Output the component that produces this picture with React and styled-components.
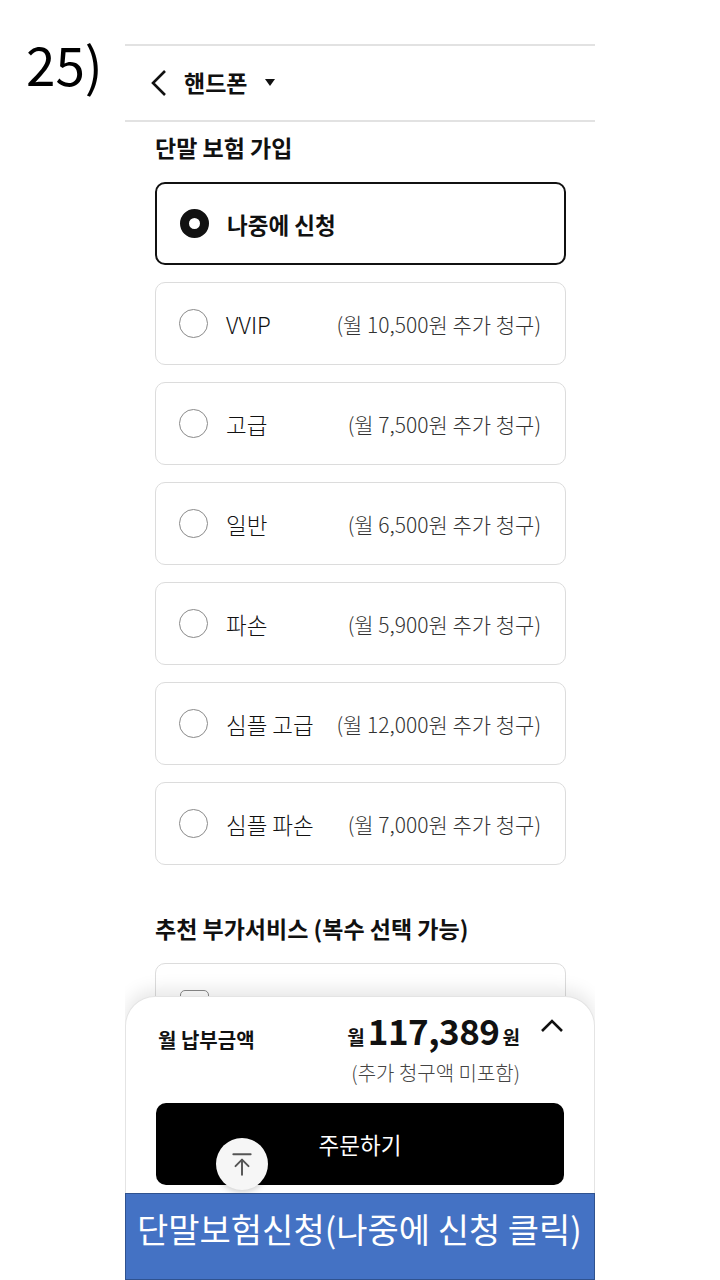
import React from "react";
import styled, { createGlobalStyle } from "styled-components";

const GlobalStyle = createGlobalStyle`
  * { box-sizing: border-box; }
  body {
    margin: 0;
    background: #ffffff;
    font-family: "Noto Sans CJK KR", "Noto Sans", sans-serif;
    color: #111;
  }
`;

const OPTIONS = [
  { name: "나중에 신청", price: null, selected: true },
  { name: "VVIP", price: "(월 10,500원 추가 청구)" },
  { name: "고급", price: "(월 7,500원 추가 청구)" },
  { name: "일반", price: "(월 6,500원 추가 청구)" },
  { name: "파손", price: "(월 5,900원 추가 청구)" },
  { name: "심플 고급", price: "(월 12,000원 추가 청구)" },
  { name: "심플 파손", price: "(월 7,000원 추가 청구)" },
];

const App = () => {
  return (
    <>
      <GlobalStyle />
      <Page>
        <StepNo>25)</StepNo>
        <Phone>
          <Header>
            <svg width="20" height="30" viewBox="0 0 20 30">
              <polyline points="17,3 5,15 17,27" fill="none" stroke="#111" strokeWidth="2.6" />
            </svg>
            <HeaderTitle>핸드폰</HeaderTitle>
            <svg width="10" height="8" viewBox="0 0 10 8">
              <polygon points="0,0 10,0 5,7" fill="#111" />
            </svg>
          </Header>

          <Content>
            <SectionTitle>단말 보험 가입</SectionTitle>
            <OptionList>
              {OPTIONS.map((opt) => (
                <OptionCard key={opt.name} $selected={opt.selected}>
                  <Radio $selected={opt.selected} />
                  <OptionName $selected={opt.selected}>{opt.name}</OptionName>
                  {opt.price && <OptionPrice>{opt.price}</OptionPrice>}
                </OptionCard>
              ))}
            </OptionList>

            <SectionTitle $top={48}>추천 부가서비스 (복수 선택 가능)</SectionTitle>
            <ExtraCard>
              <CheckBox />
              <ExtraText>안심 서비스 부가</ExtraText>
            </ExtraCard>
          </Content>

          <Sheet>
            <SheetRow>
              <SheetLabel>월 납부금액</SheetLabel>
              <PriceBlock>
                <PriceLine>
                  <PriceUnit>월</PriceUnit>
                  <PriceNum>117,389</PriceNum>
                  <PriceUnit>원</PriceUnit>
                </PriceLine>
                <PriceNote>(추가 청구액 미포함)</PriceNote>
              </PriceBlock>
              <ChevronUp viewBox="0 0 24 16" width="24" height="16">
                <polyline points="2,14 12,4 22,14" fill="none" stroke="#111" strokeWidth="2.6" />
              </ChevronUp>
            </SheetRow>
            <OrderButton>주문하기</OrderButton>
          </Sheet>

          <TopButton>
            <svg width="26" height="26" viewBox="0 0 24 24" fill="none" stroke="#555" strokeWidth="1.8" strokeLinecap="round" strokeLinejoin="round">
              <line x1="4" y1="3" x2="20" y2="3" />
              <line x1="12" y1="8" x2="12" y2="22" />
              <polyline points="6,14 12,8 18,14" />
            </svg>
          </TopButton>

          <Banner>단말보험신청(나중에 신청 클릭)</Banner>
        </Phone>
      </Page>
    </>
  );
};
export default App;

const Page = styled.div`
  display: flex;
  width: 720px;
  height: 1280px;
  overflow: hidden;
`;

const StepNo = styled.div`
  width: 125px;
  padding: 28px 0 0 26px;
  font-family: "Noto Sans CJK KR", "Noto Sans", sans-serif;
  font-size: 53px;
  line-height: 70px;
  color: #000;
`;

const Phone = styled.div`
  position: relative;
  width: 470px;
  height: 1280px;
  padding-top: 44px;
  overflow: hidden;
  background: #fff;
`;

const Header = styled.div`
  display: flex;
  align-items: center;
  gap: 12px;
  height: 78px;
  padding-left: 23px;
  border-top: 2px solid #e2e2e2;
  border-bottom: 2px solid #e2e2e2;
`;

const HeaderTitle = styled.span`
  font-size: 23px;
  font-weight: 700;
  line-height: 30px;
  margin: -3px 6px 0 4px;
`;

const Content = styled.div`
  padding: 0 29px 0 30px;
`;

const SectionTitle = styled.div`
  margin-top: ${(p) => p.$top ?? 10}px;
  font-size: 23px;
  font-weight: 700;
  line-height: 30px;
  color: #111;
`;

const OptionList = styled.div`
  display: flex;
  flex-direction: column;
  gap: 17px;
  margin-top: 20px;
`;

const OptionCard = styled.div`
  display: flex;
  align-items: center;
  height: 83px;
  padding: 0 24px 0 23px;
  border: ${(p) => (p.$selected ? "2px solid #111" : "1px solid #dcdcdc")};
  border-radius: 10px;
  background: #fff;
`;

const Radio = styled.span`
  flex: 0 0 auto;
  width: 29px;
  height: 29px;
  border-radius: 50%;
  border: ${(p) => (p.$selected ? "9px solid #111" : "1.5px solid #8a8a8a")};
  background: #fff;
`;

const OptionName = styled.span`
  margin-left: 18px;
  font-size: 22.5px;
  font-weight: ${(p) => (p.$selected ? 700 : 300)};
  line-height: 30px;
  color: #111;
`;

const OptionPrice = styled.span`
  margin-left: auto;
  font-size: 21px;
  font-weight: 300;
  line-height: 30px;
  color: #333;
`;

const ExtraCard = styled.div`
  display: flex;
  align-items: center;
  height: 83px;
  margin-top: 20px;
  padding: 0 24px;
  border: 1px solid #dcdcdc;
  border-radius: 10px;
`;

const CheckBox = styled.span`
  width: 29px;
  height: 29px;
  border: 1.5px solid #8a8a8a;
  border-radius: 5px;
`;

const ExtraText = styled.span`
  margin-left: 20px;
  font-size: 21px;
  font-weight: 300;
  color: #888;
`;

const Sheet = styled.div`
  position: absolute;
  top: 996px;
  left: 0;
  right: 0;
  bottom: 0;
  padding: 18px 30px 0 30px;
  background: #fff;
  border: 1px solid #e4e4e4;
  border-bottom: none;
  border-radius: 30px 30px 0 0;
  box-shadow: 0 -6px 18px rgba(0, 0, 0, 0.1);
`;

const SheetRow = styled.div`
  display: flex;
  align-items: flex-start;
`;

const SheetLabel = styled.span`
  padding-left: 2px;
  font-size: 20px;
  font-weight: 700;
  line-height: 50px;
`;

const PriceBlock = styled.div`
  display: flex;
  flex-direction: column;
  align-items: flex-end;
  margin-left: auto;
  margin-top: -10px;
`;

const PriceLine = styled.div`
  display: flex;
  align-items: baseline;
  gap: 3px;
  height: 50px;
  line-height: 50px;
`;

const PriceUnit = styled.span`
  font-size: 19px;
  font-weight: 700;
`;

const PriceNum = styled.span`
  font-size: 35px;
  font-weight: 700;
  letter-spacing: -0.5px;
`;

const PriceNote = styled.span`
  margin-top: 5px;
  font-size: 20px;
  font-weight: 300;
  line-height: 26px;
  color: #444;
`;

const ChevronUp = styled.svg`
  flex: 0 0 auto;
  margin: 2px 0 0 20px;
`;

const OrderButton = styled.div`
  display: flex;
  align-items: center;
  justify-content: center;
  height: 82px;
  margin-top: 17px;
  border-radius: 10px;
  background: #000;
  color: #fff;
  font-size: 22.5px;
  font-weight: 400;
`;

const TopButton = styled.div`
  position: absolute;
  top: 1138px;
  left: 91px;
  width: 52px;
  height: 52px;
  display: flex;
  align-items: center;
  justify-content: center;
  border-radius: 50%;
  background: #f6f6f6;
  box-shadow: 0 2px 6px rgba(0, 0, 0, 0.2);
`;

const Banner = styled.div`
  position: absolute;
  top: 1193px;
  left: 0;
  right: 0;
  bottom: 0;
  padding: 12px 0 0 11px;
  background: #4472c4;
  border: 1px solid #2f528f;
  color: #fff;
  font-family: "Noto Sans CJK KR", "Noto Sans", sans-serif;
  font-size: 34px;
  font-weight: 400;
  line-height: 46px;
  white-space: nowrap;
`;
